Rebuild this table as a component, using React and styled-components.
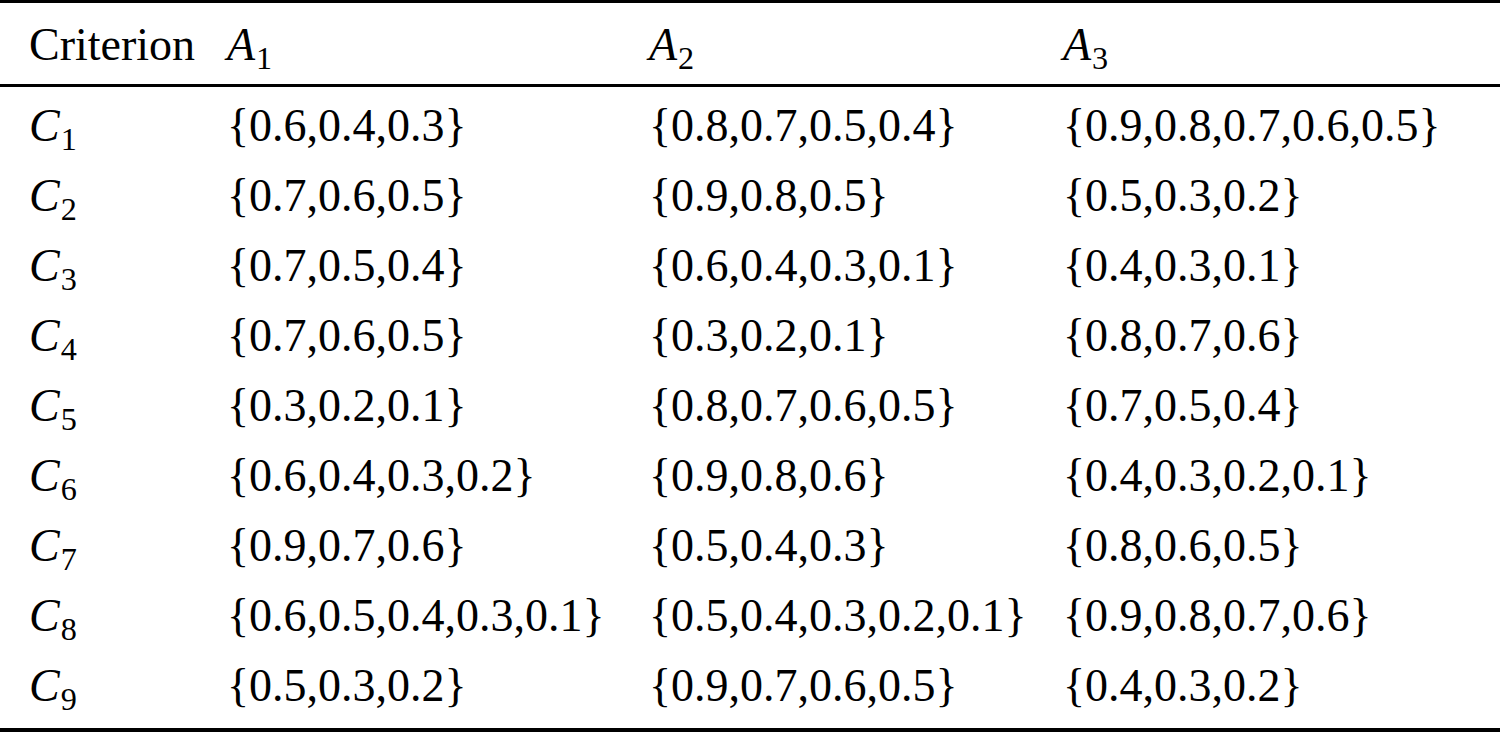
import React from 'react';
import styled, { createGlobalStyle } from 'styled-components';

const GlobalStyle = createGlobalStyle`
	body {
		margin: 0;
		background: #fff;
		color: #000;
		font-family: 'Liberation Serif', 'Times New Roman', serif;
	}
`;

const rows = [
	['1', '{0.6,0.4,0.3}', '{0.8,0.7,0.5,0.4}', '{0.9,0.8,0.7,0.6,0.5}'],
	['2', '{0.7,0.6,0.5}', '{0.9,0.8,0.5}', '{0.5,0.3,0.2}'],
	['3', '{0.7,0.5,0.4}', '{0.6,0.4,0.3,0.1}', '{0.4,0.3,0.1}'],
	['4', '{0.7,0.6,0.5}', '{0.3,0.2,0.1}', '{0.8,0.7,0.6}'],
	['5', '{0.3,0.2,0.1}', '{0.8,0.7,0.6,0.5}', '{0.7,0.5,0.4}'],
	['6', '{0.6,0.4,0.3,0.2}', '{0.9,0.8,0.6}', '{0.4,0.3,0.2,0.1}'],
	['7', '{0.9,0.7,0.6}', '{0.5,0.4,0.3}', '{0.8,0.6,0.5}'],
	['8', '{0.6,0.5,0.4,0.3,0.1}', '{0.5,0.4,0.3,0.2,0.1}', '{0.9,0.8,0.7,0.6}'],
	['9', '{0.5,0.3,0.2}', '{0.9,0.7,0.6,0.5}', '{0.4,0.3,0.2}'],
];

const Symbol = ({ letter, index }) => (
	<Sym>
		<Letter>{letter}</Letter>
		<Sub>{index}</Sub>
	</Sym>
);

const App = () => {
	return (
		<>
			<GlobalStyle />
			<Table>
				<Head>
					<Row>
						<Cell>Criterion</Cell>
						<Cell><Symbol letter="A" index="1" /></Cell>
						<Cell><Symbol letter="A" index="2" /></Cell>
						<Cell><Symbol letter="A" index="3" /></Cell>
					</Row>
				</Head>
				<Body>
					{rows.map((r) => (
						<Row key={r[0]}>
							<Cell><Symbol letter="C" index={r[0]} /></Cell>
							<Cell>{r[1]}</Cell>
							<Cell>{r[2]}</Cell>
							<Cell>{r[3]}</Cell>
						</Row>
					))}
				</Body>
			</Table>
		</>
	);
};

export default App;

const Table = styled.div`
	width: 1500px;
	height: 732px;
	box-sizing: border-box;
	border-top: 3px solid #000;
	border-bottom: 4px solid #000;
	font-size: 46px;
`;

const Head = styled.div`
	padding: 7px 0 4px;
	border-bottom: 3px solid #000;
`;

const Body = styled.div`
	padding: 4px 0 7px;
`;

const Row = styled.div`
	display: grid;
	grid-template-columns: 198px 422px 414px 1fr;
	padding-left: 29px;
	height: 70px;
	line-height: 70px;
	white-space: nowrap;
`;

const Cell = styled.div`
	overflow: visible;
`;

const Sym = styled.span`
	white-space: nowrap;
`;

const Letter = styled.i`
	font-style: italic;
`;

const Sub = styled.sub`
	font-size: 0.7em;
	vertical-align: -9px;
	line-height: 0;
	margin-left: 1px;
`;
